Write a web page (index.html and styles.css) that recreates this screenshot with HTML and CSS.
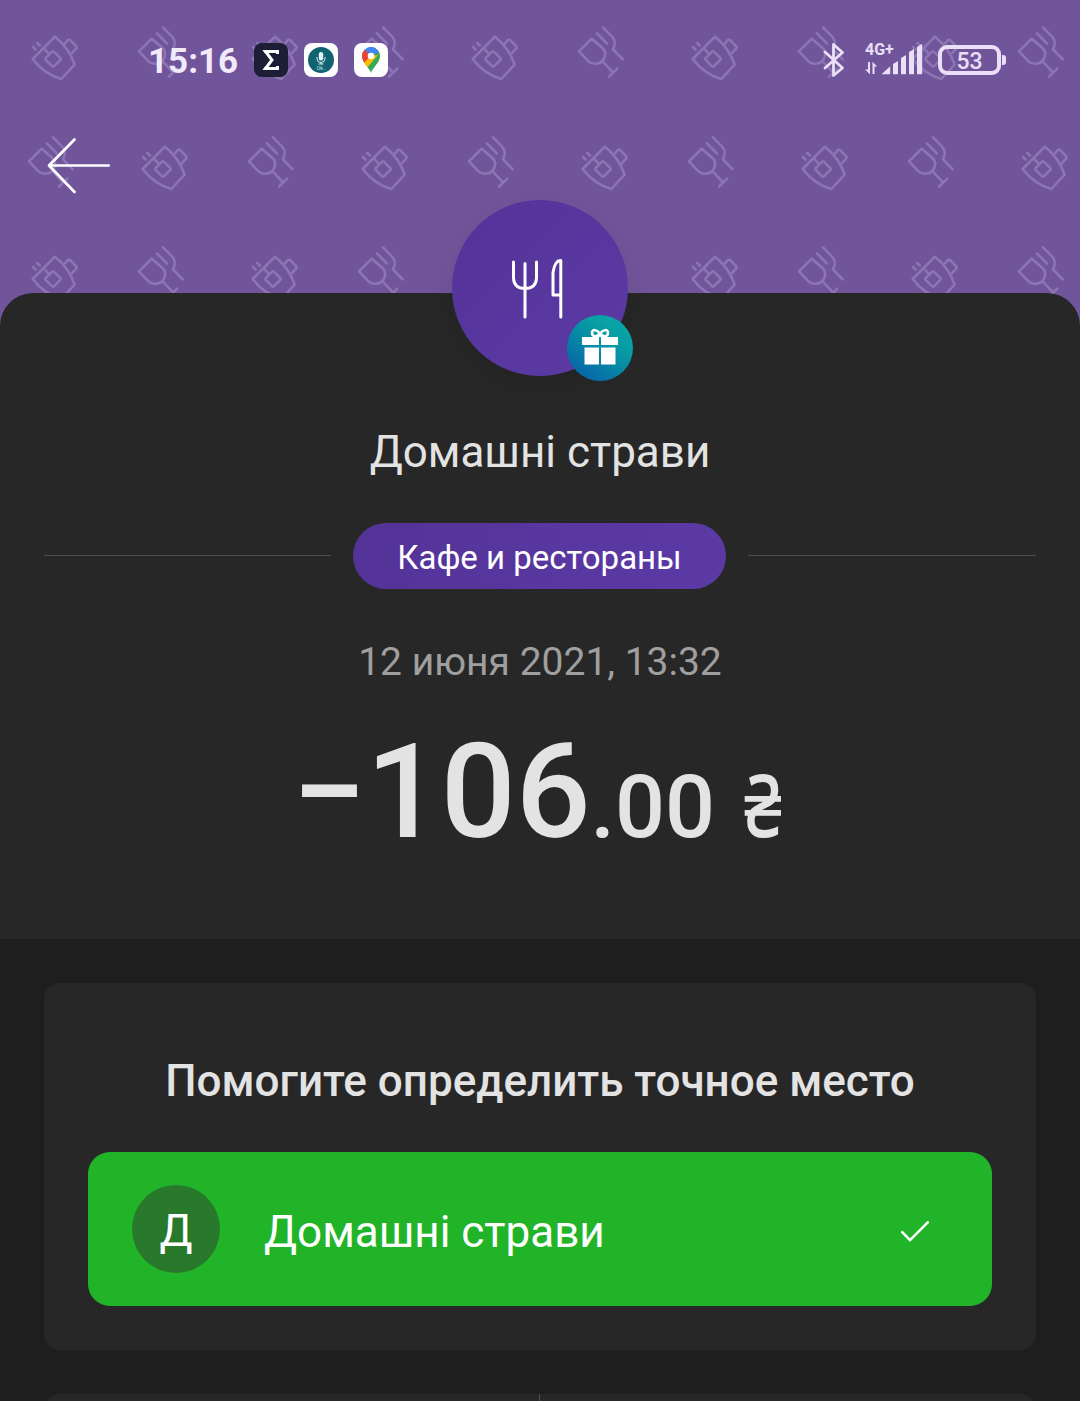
FILE: index.html
```html
<!DOCTYPE html>
<html lang="ru">
<head>
<meta charset="utf-8">
<title>Домашні страви</title>
<link rel="stylesheet" href="styles.css">
</head>
<body>
<div class="screen">
  <header class="header">
    <svg class="header-pattern" width="1080" height="330" aria-hidden="true">
      <defs>
        <g id="cup">
          <path d="M55 36.7 32.7 59Q44 74 61.3 79L74.7 64.5Q69 48 55 36.7Z"/>
          <path d="M65 43.5 67.3 40.6Q69 38.8 70.7 40.6L76 46.2Q77.3 47.6 75.8 49.2L72 53"/>
          <rect x="47.2" y="53.2" width="11.6" height="11.6" rx="1.5" transform="rotate(45 53 59)"/>
          <path d="M44.7 49.3 49.3 54.3M33 47 35.7 49.7M37.3 43 40 45.7"/>
        </g>
        <g id="glass">
          <path d="M151.7 38.7 139 51.3 148 60.8C152 64.8 159 64.6 162.500 60.800S166.200 51 162.500 48Z"/>
          <path d="M162.300 61 173 72.300M169 76.700 177.300 68.700M157 33.300 167 43.700M163 27.300 172 36.500Q177 42 173 49.300L182.700 59.300"/>
        </g>
        <pattern id="food" width="220" height="220" patternUnits="userSpaceOnUse">
          <g class="pattern-lines">
            <use href="#cup"/><use href="#glass"/>
            <use href="#cup" x="110" y="110"/><use href="#glass" x="-110" y="110"/>
          </g>
        </pattern>
      </defs>
      <rect width="1080" height="330" fill="url(#food)"/>
    </svg>
    <div class="status-bar">
      <div class="status-left">
        <span class="clock">15:16</span>
        <svg class="app" width="34" height="34" viewBox="0 0 34 34"><rect width="34" height="34" rx="8" fill="#1b1e35"/><path d="M23.500 11V8.500H11.500L18 17l-6.500 8.500h12V23" fill="none" stroke="#fff" stroke-width="3"/><path d="M9 7h5v3H10.500zM9 27h5v-3h-3.500z" fill="#fff"/></svg>
        <svg class="app" width="34" height="34" viewBox="0 0 34 34"><rect width="34" height="34" rx="8" fill="#fff"/><circle cx="17" cy="17" r="13" fill="#126372"/><rect x="14.800" y="9" width="4.400" height="8.500" rx="2.200" fill="#e3f6f6"/><path d="M13 14v1.500a4 4 0 0 0 8 0V14M17 19.500v1.500M14.500 21h5" fill="none" stroke="#d8f2f2" stroke-width="1"/><text class="mini" x="17" y="26.500" text-anchor="middle">Ok..</text></svg>
        <svg class="app" width="34" height="34" viewBox="0 0 34 34"><defs><clipPath id="pin"><path d="M17 30C15.700 25 8 19.500 8 13a9 9 0 0 1 18 0c0 6.500-7.700 12-9 17Z"/></clipPath></defs><rect width="34" height="34" rx="8" fill="#fff"/><g clip-path="url(#pin)"><path fill="#34a853" d="M7 3h20v28H7z"/><path fill="#4285f4" d="M9 2h18v6L17 13 10 7z"/><path fill="#4285f4" d="m17 13 7-9-8-1-4 5z"/><path fill="#fbbc04" d="m16 13-9 9 5 4 12-14z"/><path fill="#ea4335" d="m10 6 7 7-7 7-4-8z"/><path fill="#fbbc04" d="m14.500 15-6 7 3.500 3 8-9.500z"/></g><circle cx="17" cy="13" r="3.300" fill="#fff"/></svg>
      </div>
      <div class="status-right">
        <svg width="24" height="36" viewBox="0 0 24 36" fill="none" stroke="#e9dff6" stroke-width="2.800" stroke-linejoin="round" stroke-linecap="round"><path d="M3 10 20.500 26 11.500 33.500V2.500L20.500 10.500 3 26"/></svg>
        <div class="network">
          <span class="net-type">4G+</span>
          <svg class="signal" width="58" height="32" viewBox="0 0 58 32" fill="#e9dff6"><path d="M3 17h2v12.300L0 24.500h3zM7.500 29V16.700l4.700 4.800H9.500V29zM16.500 29.300l8.700-8v8zM28 29.300V19l5-3v13.300zM36 29.300V13l5-3v19.300zM44 29.300V7l5-3v25.300zM52 29.300V2l5.200-3.200v30.500z"/></svg>
        </div>
        <div class="battery"><span>53</span></div>
      </div>
    </div>
    <nav class="nav">
      <svg width="66" height="60" viewBox="0 0 66 60" fill="none" stroke="#fff" stroke-width="2.700" stroke-linecap="round" stroke-linejoin="round"><path d="M29.500 4.500 4 30.500 29.500 57M4 30.500H63.700"/></svg>
    </nav>
  </header>

  <main class="sheet">
    <section class="summary">
      <div class="avatar">
        <svg width="176" height="176" viewBox="0 0 176 176" fill="none" stroke="#fff" stroke-width="3" stroke-linecap="round" stroke-linejoin="round"><path d="M61.500 62V78Q62 88.500 73 88.500T84.500 78V62M73 63.500V117M108.800 117V60.500Q103 60 101 72.500V95H108.800"/></svg>
        <svg class="gift" width="66" height="66" viewBox="0 0 66 66">
          <defs><linearGradient id="teal" x1="0.200" y1="0.900" x2="0.800" y2="0.100"><stop stop-color="#0767a8"/><stop offset="0.650" stop-color="#0798a4"/><stop offset="1" stop-color="#08a6a5"/></linearGradient></defs>
          <circle cx="33" cy="33" r="33" fill="url(#teal)"/>
          <path fill="#fff" d="M15 22h17v8H15zM34 22h17v8H34zM17.500 32.500H32v17H17.500zM34 32.500h14.500v17H34z"/>
          <path fill="none" stroke="#fff" stroke-width="2.500" d="M33 19C30 14 25 14 25 18s5 4 8 1c3 3 8 3 8-1s-5-4-8 1v3"/>
        </svg>
      </div>
      <h1 class="merchant">Домашні страви</h1>
      <div class="category"><span class="pill">Кафе и рестораны</span></div>
      <time class="date">12 июня 2021, 13:32</time>
      <div class="amount"><span class="whole">−106</span><span class="cents">.00</span><span class="currency">₴</span></div>
    </section>

    <section class="details">
      <div class="card">
        <h2 class="question">Помогите определить точное место</h2>
        <button class="place">
          <span class="letter">Д</span>
          <span class="place-name">Домашні страви</span>
          <svg class="check" width="30" height="24" viewBox="0 0 30 24" fill="none" stroke="#fff" stroke-width="2.600" stroke-linecap="round" stroke-linejoin="round"><path d="M2.200 13.200 10 21.200 27.800 3.300"/></svg>
        </button>
      </div>
      <div class="actions"><div class="action"></div><div class="action"></div></div>
    </section>
  </main>
</div>
</body>
</html>
```
FILE: styles.css
```css
* { box-sizing: border-box; }
body { margin: 0; background: #1e1e1e; font-family: Roboto, "Liberation Sans", sans-serif; }
h1, h2 { margin: 0; font-weight: 400; }
svg { display: block; flex: none; }

.screen { width: 1080px; height: 1401px; overflow: hidden; display: flex; flex-direction: column; }

.header { position: relative; height: 293px; flex: none; background: #71559b; }
.header-pattern { position: absolute; left: 0; top: 0; background: #71559b; }
.pattern-lines { fill: none; stroke: #8d74b2; stroke-width: 2.5; stroke-linecap: round; stroke-linejoin: round; }

.status-bar { position: relative; height: 120px; padding: 0 74px 0 148px; display: flex; align-items: center; justify-content: space-between; }
.status-left { display: flex; align-items: center; gap: 16px; }
.clock { width: 90px; color: #f1eafb; font-size: 35px; font-weight: 700; line-height: 40px; padding-top: 3px; }
.mini { font: 5px Roboto, sans-serif; fill: #d8f2f2; }
.status-right { display: flex; align-items: center; color: #e9dff6; }
.network { width: 58px; height: 36px; margin: 0 15px 0 19px; display: grid; }
.net-type { grid-area: 1 / 1; font-size: 16px; font-weight: 700; line-height: 16px; }
.signal { grid-area: 1 / 1; margin-top: 3px; overflow: visible; }
.battery { position: relative; width: 63px; height: 30px; margin-right: 5px; border: 4px solid #e9dff6; border-radius: 9px; display: flex; align-items: center; justify-content: center; font-size: 23px; font-weight: 500; line-height: 26px; padding-top: 4px; }
.battery::after { content: ""; position: absolute; right: -9px; top: 6px; width: 4px; height: 10px; border-radius: 0 3px 3px 0; background: #e9dff6; }

.nav { position: relative; padding: 15px 45px; }

.sheet { position: relative; flex: 1; border-radius: 33px 33px 0 0; background: #272727; }
.summary { height: 646px; display: flex; flex-direction: column; align-items: center; }
.avatar { position: relative; width: 176px; height: 176px; flex: none; margin-top: -93px; border-radius: 50%; background: linear-gradient(135deg, #533398, #5c3aa6); box-shadow: 0 8px 28px rgba(0, 0, 0, 0.1); }
.gift { position: absolute; left: 115px; top: 115px; }
.merchant { margin-top: 46px; font-size: 44px; line-height: 60px; color: #e3e3e3; }
.category { align-self: stretch; margin: 41px 44px 0; display: grid; grid-template-columns: 287px 373px 288px; align-items: center; gap: 22px; }
.category::before, .category::after { content: ""; height: 1px; margin-bottom: 1px; background: #505050; }
.pill { height: 66px; padding-top: 2px; border-radius: 33px; background: linear-gradient(100deg, #533398, #5c3aa6); color: #fff; font-size: 33px; line-height: 66px; text-align: center; }
.date { margin-top: 43px; font-size: 39px; line-height: 60px; color: #9f9f9f; }
.amount { align-self: stretch; padding-left: 292px; height: 150px; margin-top: 25px; display: flex; align-items: baseline; color: #e3e3e3; font-weight: 500; line-height: 150px; }
.whole { font-size: 132px; letter-spacing: -0.2px; }
.cents { font-size: 88px; }
.currency { margin-left: 29px; font-family: "Noto Sans", sans-serif; font-size: 88px; transform: scaleX(0.77); transform-origin: left; }

.details { height: 470px; padding: 44px 44px 0; background: #1e1e1e; }
.card { height: 367px; padding: 68px 44px 0; border-radius: 16px; background: #272727; }
.question { font-size: 44px; font-weight: 500; line-height: 60px; text-align: center; color: #e3e3e3; white-space: nowrap; }
.place { width: 904px; height: 154px; margin-top: 41px; padding: 0 62px 0 44px; border: 0; border-radius: 22px; background: #22b428; color: #fff; font: 44px/60px Roboto, sans-serif; display: flex; align-items: center; }
.letter { width: 88px; height: 88px; border-radius: 50%; background: #29792d; line-height: 92px; margin-right: 44px; }
.place-name { flex: 1; text-align: left; padding-top: 5px; }
.check { margin-top: 4px; }
.actions { margin-top: 44px; height: 140px; border-radius: 16px; background: #272727; display: grid; grid-template-columns: 496px 1fr; }
.action:first-child { border-right: 1px solid #505050; }
```
